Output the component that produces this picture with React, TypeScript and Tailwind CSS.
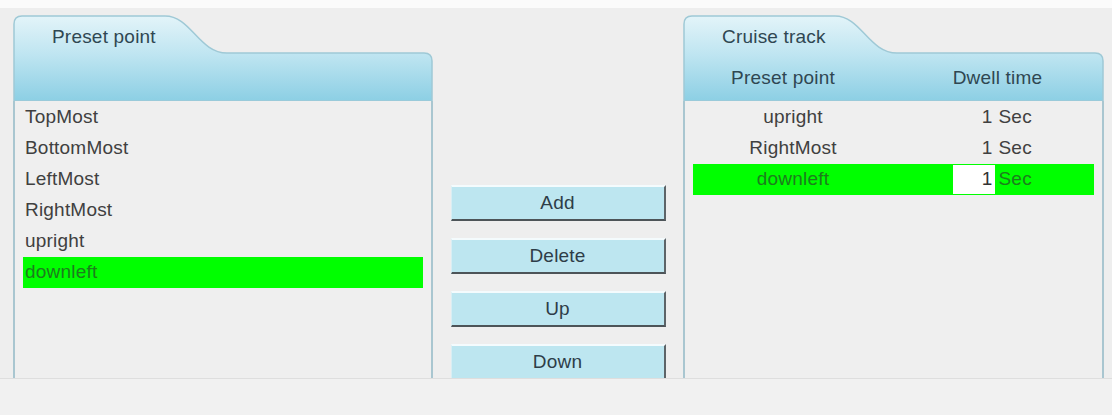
import React from "react";

function Header({ width, title, children }: { width: number; title: string; children?: React.ReactNode }) {
  const h = 86;
  const w = width;
  const path = `M1,${h} L1,9 Q1,1 9,1 L152,1 C178,1 186,38 214,38 L${w - 9},38 Q${w - 1},38 ${w - 1},46 L${w - 1},${h} Z`;
  const id = "g" + title.replace(/\s/g, "");
  return (
    <div className="relative h-[86px] shrink-0">
      <svg className="absolute inset-0" width={w} height={h} viewBox={`0 0 ${w} ${h}`}>
        <defs>
          <linearGradient id={id} x1="0" y1="0" x2="0" y2="1">
            <stop offset="0" stopColor="#e3f4f9" />
            <stop offset="0.45" stopColor="#bfe5f1" />
            <stop offset="1" stopColor="#8ccfe4" />
          </linearGradient>
        </defs>
        <path d={path} fill={`url(#${id})`} stroke="#9fc9d6" strokeWidth="1.5" />
      </svg>
      <div className="relative flex flex-col h-full">
        <div className="h-[40px] flex items-center pl-[39px] pt-[5px] text-[#2f4752]">{title}</div>
        <div className="flex-1 flex items-center">{children}</div>
      </div>
    </div>
  );
}

const leftItems = ["TopMost", "BottomMost", "LeftMost", "RightMost", "upright", "downleft"];
const rightItems = [
  { name: "upright", t: "1" },
  { name: "RightMost", t: "1" },
  { name: "downleft", t: "1", sel: true },
];

export default function App() {
  return (
    <div className="w-[1112px] h-[415px] bg-[#eeeeee] flex flex-col overflow-hidden font-['Liberation_Sans',Arial,sans-serif] text-[19px] tracking-[0.2px]">
      <div className="h-[8px] bg-[#fbfbfb] shrink-0" />
      <div className="flex h-[370px] pt-[7px] pl-[13px] shrink-0">
        {/* left panel */}
        <div className="w-[420px] h-[363px] flex flex-col">
          <Header width={420} title="Preset point" />
          <div className="flex-1 border-x-2 border-[#a9c6d0] bg-[#efefef] pt-[1px] px-[8px]">
            {leftItems.map((it) => (
              <div
                key={it}
                className={
                  "h-[31px] flex items-center px-[2px] " +
                  (it === "downleft" ? "bg-[#00ff00] text-[#1d7d1d]" : "text-[#404040]")
                }
              >
                {it}
              </div>
            ))}
          </div>
        </div>
        {/* middle */}
        <div className="w-[250px] h-[363px] overflow-hidden flex flex-col items-center pt-[170px] gap-[17px]">
          {["Add", "Delete", "Up", "Down"].map((b) => (
            <div
              key={b}
              className="w-[215px] h-[36px] shrink-0 bg-[#bde6f0] border-t-2 border-t-[#f4fbfd] border-l border-l-[#d8eef4] border-r-2 border-r-[#5d6468] border-b-2 border-b-[#4d5458] flex items-center justify-center text-[#2e3d48]"
            >
              {b}
            </div>
          ))}
        </div>
        {/* right panel */}
        <div className="w-[421px] h-[363px] flex flex-col">
          <Header width={421} title="Cruise track">
            <div className="flex w-full text-[#2f4752]">
              <div className="w-[200px] text-center">Preset point</div>
              <div className="flex-1 text-center pl-[8px]">Dwell time</div>
            </div>
          </Header>
          <div className="flex-1 border-x-2 border-[#a9c6d0] bg-[#efefef] pt-[1px] px-[8px]">
            {rightItems.map((it) => (
              <div
                key={it.name}
                className={
                  "h-[31px] flex items-center " +
                  (it.sel ? "bg-[#00ff00] text-[#1d7d1d]" : "text-[#404040]")
                }
              >
                <div className="w-[200px] text-center">{it.name}</div>
                <div className="flex-1 flex items-center justify-center">
                  <div
                    className={
                      "w-[42px] h-[29px] flex items-center justify-end pr-[2px] " +
                      (it.sel ? "bg-white text-[#333]" : "")
                    }
                  >
                    {it.t}
                  </div>
                  <div className="w-[40px] pl-[4px]">Sec</div>
                </div>
              </div>
            ))}
          </div>
        </div>
      </div>
      <div className="flex-1 bg-[#f1f1f1] border-t border-[#dedede]" />
    </div>
  );
}
